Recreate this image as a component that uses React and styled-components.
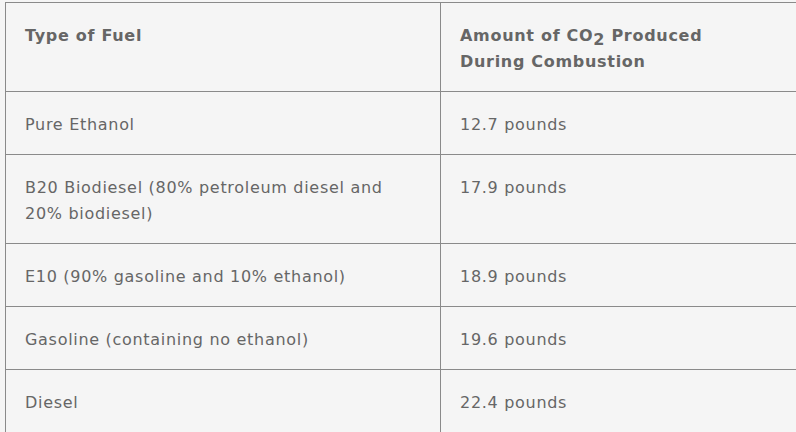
import React from "react";
import styled, { createGlobalStyle } from "styled-components";

const Global = createGlobalStyle`
  html, body { margin: 0; padding: 0; background: #f5f5f5; }
  body { font-family: "DejaVu Sans", Verdana, sans-serif; }
`;

const Wrap = styled.div`
  padding: 2px 1px 0 5px;
`;

const Table = styled.table`
  width: 791px;
  border-collapse: collapse;
  border: 1px solid #8a8a8a;
  table-layout: fixed;
  color: #666;
  font-size: 16px;
  line-height: 26px;
  letter-spacing: 0.7px;
`;

const Col = styled.col`
  width: ${(p) => p.$w};
`;

const Cell = styled.td`
  box-sizing: border-box;
  border: 1px solid #8a8a8a;
  padding: 20px 24px 16px 19px;
  vertical-align: top;
  text-align: left;
`;

const Head = styled(Cell).attrs({ as: "th" })`
  font-weight: bold;
`;

const Sub = styled.sub`
  font-size: inherit;
  line-height: 0;
  vertical-align: -4px;
`;

const rows = [
  ["Pure Ethanol", "12.7 pounds"],
  ["B20 Biodiesel (80% petroleum diesel and 20% biodiesel)", "17.9 pounds"],
  ["E10 (90% gasoline and 10% ethanol)", "18.9 pounds"],
  ["Gasoline (containing no ethanol)", "19.6 pounds"],
  ["Diesel", "22.4 pounds"],
];

export default function App() {
  return (
    <>
      <Global />
      <Wrap>
        <Table>
          <colgroup>
            <Col $w="435px" />
            <Col $w="356px" />
          </colgroup>
          <thead>
            <tr>
              <Head>Type of Fuel</Head>
              <Head>
                Amount of CO<Sub>2</Sub> Produced During Combustion
              </Head>
            </tr>
          </thead>
          <tbody>
            {rows.map(([a, b]) => (
              <tr key={a}>
                <Cell>{a}</Cell>
                <Cell>{b}</Cell>
              </tr>
            ))}
          </tbody>
        </Table>
      </Wrap>
    </>
  );
}
